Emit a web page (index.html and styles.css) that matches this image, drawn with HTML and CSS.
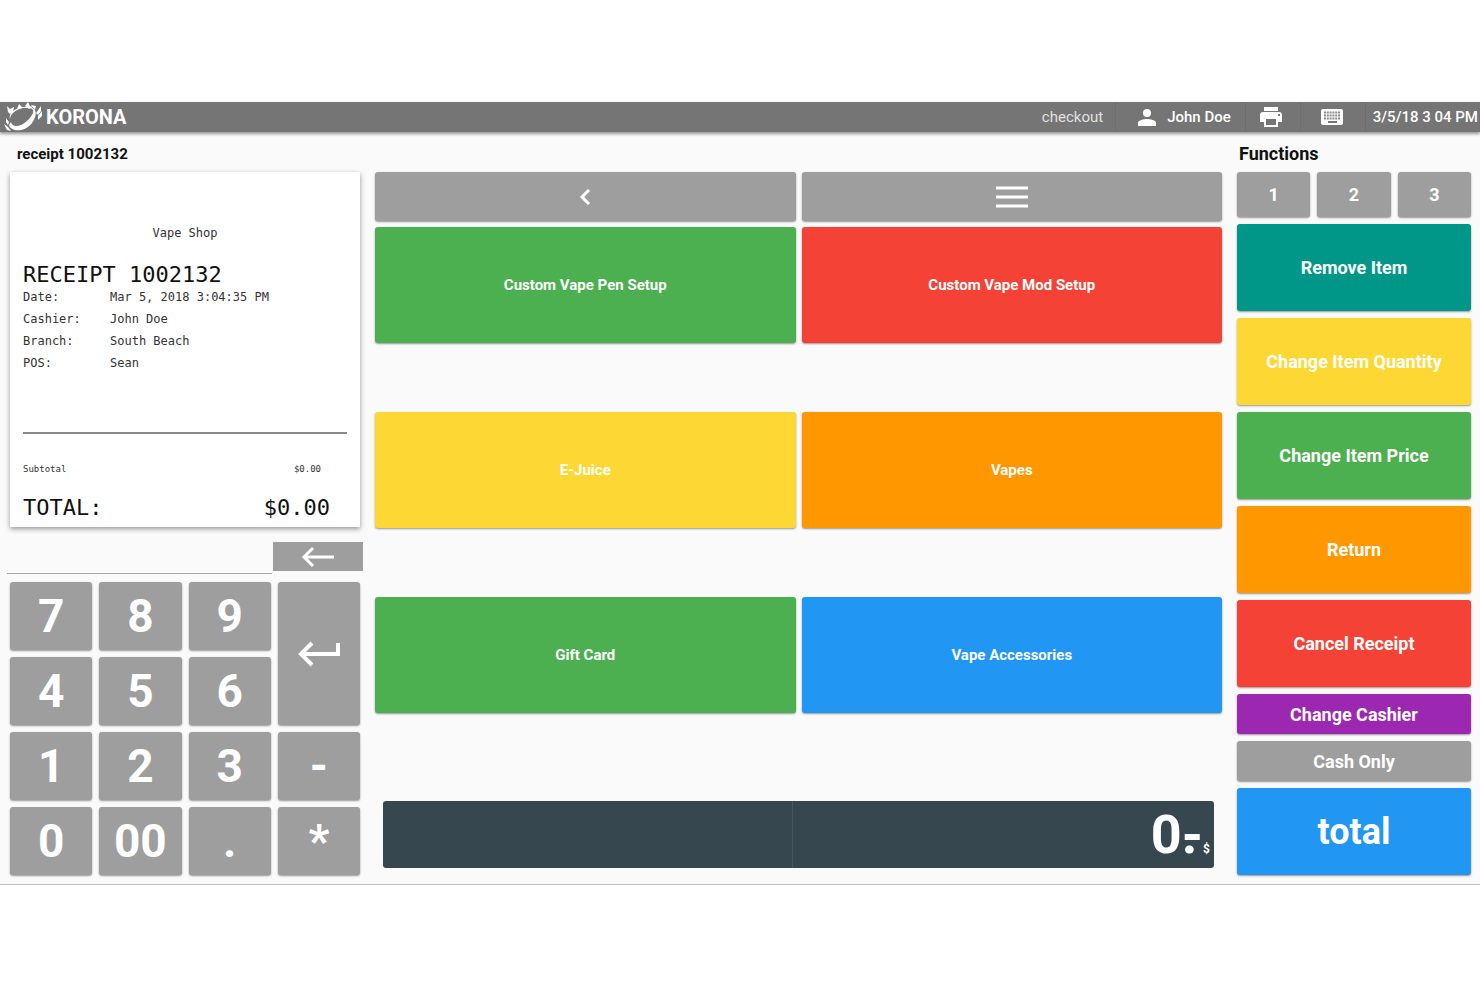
FILE: index.html
```html
<!DOCTYPE html>
<html lang="en">
<head>
    <meta charset="UTF-8">
    <meta name="viewport" content="width=device-width, initial-scale=1.0">
    <title>Korona POS</title>
    <link rel="stylesheet" href="styles.css">
</head>
<body>
    <div class="pos">
        <header class="topbar">
            <div class="logo">
                <svg width="40" height="30" viewBox="0 0 40 30" fill="#fff" aria-hidden="true">
                    <path fill-rule="evenodd" d="M8 10C12 6 19 4 25 5c6 1 8 5 6 10-2 7-8 12-14 13-6 1-11-1-12-5l2-3c1 4 5 5 10 3 6-3 10-8 12-12 1-3-1-5-4-5-6-1-12 1-16 5-2 2-3 4-3 6-1-2 0-5 2-7z"/>
                    <path d="M3 4l3 3 4-2-1 5-3 2-2-2zM13 7l2-5 4 4zM21 4l3-4 2 4 3 1-4 2zM27 3l5 1-1 4zM37 4v5l-3 4-2-2zM38 9v5l-4 4v-4zM2 16l3 4-1 3-2-3zM0 22l4 3 3 4-4-1z"/>
                </svg>
                <span>KORONA</span>
            </div>
            <div class="status">
                <span class="status-item checkout">checkout</span>
                <span class="status-item user">
                    <svg width="18" height="18" viewBox="0 0 18 18" fill="#fff" aria-hidden="true">
                        <circle cx="9" cy="5" r="4"/>
                        <path d="M0 18v-3c0-3 6-4 9-4s9 1 9 4v3z"/>
                    </svg>
                    John Doe
                </span>
                <span class="status-item printer">
                    <svg width="22" height="20" viewBox="0 0 22 20" fill="#fff" aria-hidden="true">
                        <path d="M4 0h14v4H4zM3 5h16c2 0 3 1 3 3v7h-4v5H4v-5H0V8c0-2 1-3 3-3zm3 7v6h10v-6zm12-5v2h2V7z" fill-rule="evenodd"/>
                    </svg>
                </span>
                <span class="status-item keyboard">
                    <svg width="22" height="16" viewBox="0 0 22 16" aria-hidden="true">
                        <rect width="22" height="16" rx="2" fill="#fff"/>
                        <path d="M3 3.500h16M3 6.500h16M3 9.500h16" stroke="#8a8a8a" stroke-width="2" stroke-dasharray="2 0.800"/>
                        <path d="M7 13h9" stroke="#757575" stroke-width="2"/>
                    </svg>
                </span>
                <span class="status-item clock">3/5/18 3 04 PM</span>
            </div>
        </header>

        <main class="content">
            <section class="left">
                <h1 class="title receipt-title">receipt 1002132</h1>
                <div class="receipt">
                    <p class="shop">Vape Shop</p>
                    <p class="big">RECEIPT 1002132</p>
                    <dl class="details">
                        <dt>Date:</dt><dd>Mar 5, 2018 3:04:35 PM</dd>
                        <dt>Cashier:</dt><dd>John Doe</dd>
                        <dt>Branch:</dt><dd>South Beach</dd>
                        <dt>POS:</dt><dd>Sean</dd>
                    </dl>
                    <hr>
                    <div class="subtotal"><span>Subtotal</span><span>$0.00</span></div>
                    <div class="sum big"><span>TOTAL:</span><span>$0.00</span></div>
                </div>

                <div class="entry">
                    <input type="text" class="entry-input" aria-label="Input">
                    <button class="backspace" aria-label="Backspace">
                        <svg width="34" height="22" viewBox="0 0 34 22" fill="none" stroke="#fff" stroke-width="3" aria-hidden="true">
                            <path d="M33 11H3M12 2L3 11l9 9"/>
                        </svg>
                    </button>
                </div>

                <div class="keypad">
                    <button class="key">7</button>
                    <button class="key">8</button>
                    <button class="key">9</button>
                    <button class="key enter" aria-label="Enter">
                        <svg width="44" height="26" viewBox="0 0 44 26" fill="none" stroke="#fff" stroke-width="4" aria-hidden="true">
                            <path d="M41 2v11H4M15 2L4 13l11 11"/>
                        </svg>
                    </button>
                    <button class="key">4</button>
                    <button class="key">5</button>
                    <button class="key">6</button>
                    <button class="key">1</button>
                    <button class="key">2</button>
                    <button class="key">3</button>
                    <button class="key">-</button>
                    <button class="key">0</button>
                    <button class="key">00</button>
                    <button class="key">.</button>
                    <button class="key">*</button>
                </div>
            </section>

            <section class="middle">
                <div class="nav">
                    <button class="btn gray" aria-label="Back">
                        <svg width="12" height="18" viewBox="0 0 12 18" fill="none" stroke="#fff" stroke-width="3" aria-hidden="true">
                            <path d="M10 2L3 9l7 7"/>
                        </svg>
                    </button>
                    <button class="btn gray" aria-label="Menu">
                        <svg width="32" height="22" viewBox="0 0 32 22" stroke="#fff" stroke-width="3" aria-hidden="true">
                            <path d="M0 2h32M0 11h32M0 20h32"/>
                        </svg>
                    </button>
                </div>
                <div class="tiles">
                    <button class="btn green">Custom Vape Pen Setup</button>
                    <button class="btn red">Custom Vape Mod Setup</button>
                    <button class="btn yellow">E-Juice</button>
                    <button class="btn orange">Vapes</button>
                    <button class="btn green">Gift Card</button>
                    <button class="btn blue">Vape Accessories</button>
                </div>
                <div class="display">
                    <div class="display-cell"></div>
                    <div class="display-cell amount">
                        <span>0</span>
                        <span class="cents"><span>.</span><span>-</span></span>
                        <span class="currency">$</span>
                    </div>
                </div>
            </section>

            <section class="right">
                <h2 class="title functions-title">Functions</h2>
                <div class="functions">
                    <div class="tabs">
                        <button class="btn gray">1</button>
                        <button class="btn gray">2</button>
                        <button class="btn gray">3</button>
                    </div>
                    <button class="btn tall teal">Remove Item</button>
                    <button class="btn tall yellow">Change Item Quantity</button>
                    <button class="btn tall green">Change Item Price</button>
                    <button class="btn tall orange">Return</button>
                    <button class="btn tall red">Cancel Receipt</button>
                    <button class="btn low purple">Change Cashier</button>
                    <button class="btn low gray">Cash Only</button>
                    <button class="btn tall total blue">total</button>
                </div>
            </section>
        </main>
    </div>
</body>
</html>
```
FILE: styles.css
```css
* {
    box-sizing: border-box;
}

body {
    margin: 0;
    min-height: 100vh;
    display: flex;
    align-items: center;
    background-color: #fff;
    font-family: Roboto, "Liberation Sans", sans-serif;
    color: #111;
}

h1, h2, p, dl, dd {
    margin: 0;
}

button {
    border: none;
    padding: 0;
    font-family: inherit;
    font-weight: 700;
    color: #fff;
    cursor: pointer;
    display: flex;
    align-items: center;
    justify-content: center;
}

.pos {
    width: 100%;
    background-color: #fafafa;
    border-bottom: 1px solid #bdbdbd;
}

/* top bar */
.topbar {
    display: flex;
    justify-content: space-between;
    height: 30px;
    background-color: #757575;
    box-shadow: 0 2px 3px rgba(0, 0, 0, 0.4);
    color: #fff;
}

.logo {
    display: flex;
    align-items: center;
    gap: 2px;
    padding-left: 4px;
    font-size: 20px;
    line-height: 30px;
    font-weight: 700;
}

.status {
    display: flex;
    font-size: 15px;
    font-weight: 500;
}

.status-item {
    display: flex;
    align-items: center;
    border-left: 1px solid #6e6e6e;
}

.checkout {
    border-left: none;
    padding-right: 12px;
    font-weight: 400;
    color: #e0e0e0;
}

.user {
    gap: 11px;
    padding: 0 14px 0 22px;
}

.printer {
    padding: 0 18px 0 14px;
}

.keyboard {
    padding: 0 22px 0 20px;
}

.clock {
    padding: 0 2px 0 7px;
}

/* three columns */
.content {
    display: grid;
    grid-template-columns: 350fr 847fr 234fr;
    gap: 15px;
    padding: 0 9px 9px 10px;
}

.title {
    height: 40px;
    padding-top: 4px;
    line-height: 36px;
    font-weight: 700;
}

.receipt-title {
    padding-left: 7px;
    font-size: 15px;
}

.functions-title {
    padding-left: 2px;
    font-size: 18px;
}

/* receipt */
.receipt {
    height: 355px;
    padding: 50px 13px 0;
    background-color: #fff;
    box-shadow: 0 2px 5px rgba(0, 0, 0, 0.4);
    font-family: "DejaVu Sans Mono", monospace;
    font-size: 12px;
    line-height: 22px;
    color: #333;
}

.shop {
    text-align: center;
    margin-bottom: 20px;
}

.big {
    font-size: 22px;
    color: #111;
}

.details {
    display: grid;
    grid-template-columns: 87px 1fr;
}

.receipt hr {
    margin: 58px 0 24px;
    border: none;
    border-top: 2px solid #8a8a8a;
}

.subtotal,
.sum {
    display: flex;
    justify-content: space-between;
}

.subtotal {
    padding-right: 26px;
    font-size: 9px;
}

.sum {
    padding: 17px 17px 0 0;
}

/* keypad */
.entry {
    display: flex;
    align-items: flex-start;
    gap: 1px;
    margin: 15px -3px 8px;
}

.entry-input {
    flex: 1;
    min-width: 0;
    height: 32px;
    padding: 0 4px;
    border: none;
    border-bottom: 1px solid #a6a6a6;
    background: transparent;
    font: 500 18px Roboto, sans-serif;
}

.backspace {
    width: 90px;
    height: 29px;
    background-color: #9e9e9e;
}

.keypad {
    display: grid;
    grid-template-columns: repeat(4, 1fr);
    grid-auto-rows: 68px;
    gap: 7px;
}

.key,
.btn {
    border-radius: 3px;
    box-shadow: 0 1px 2px rgba(0, 0, 0, 0.4);
}

.key {
    background-color: #9e9e9e;
    font-size: 46px;
}

.enter {
    grid-row: span 2;
}

/* product tiles */
.middle {
    padding-top: 40px;
}

.middle .btn {
    font-size: 15px;
}

.nav,
.tiles {
    display: grid;
    grid-template-columns: 1fr 1fr;
    column-gap: 6px;
}

.nav {
    grid-auto-rows: 49px;
    margin-bottom: 6px;
}

.tiles {
    grid-auto-rows: 116px;
    row-gap: 69px;
}

.display {
    display: grid;
    grid-template-columns: 409fr 423fr;
    grid-template-rows: 67px;
    margin: 88px 8px 0;
    border-radius: 3px;
    background-color: #37474f;
    color: #fff;
}

.amount {
    display: flex;
    justify-content: flex-end;
    align-items: baseline;
    padding-right: 4px;
    border-left: 1px solid #4e5558;
    font-size: 54px;
    line-height: 67px;
    font-weight: 700;
}

/* dot and dash share one cell */
.cents {
    display: grid;
}

.cents span {
    grid-area: 1 / 1;
}

.currency {
    font-size: 12px;
    line-height: 12px;
}

/* function buttons */
.functions {
    display: flex;
    flex-direction: column;
    gap: 7px;
}

.functions .btn {
    font-size: 18px;
}

.tabs {
    display: grid;
    grid-template-columns: repeat(3, 1fr);
    grid-auto-rows: 45px;
    gap: 7px;
}

.tall {
    height: 87px;
}

.low {
    height: 40px;
}

.functions .total {
    font-size: 36px;
}

/* colours */
.gray {
    background-color: #9e9e9e;
}

.green {
    background-color: #4caf50;
}

.red {
    background-color: #f44336;
}

.yellow {
    background-color: #fdd835;
}

.orange {
    background-color: #ff9800;
}

.blue {
    background-color: #2196f3;
}

.teal {
    background-color: #009688;
}

.purple {
    background-color: #9c27b0;
}
```
